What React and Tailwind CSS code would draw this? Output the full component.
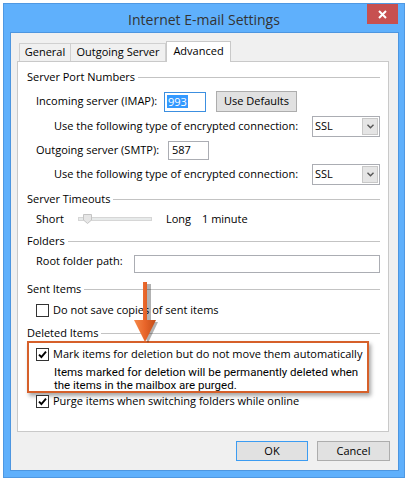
import React from "react";

function Check({ checked }) {
  return (
    <span className="w-[13px] h-[13px] border border-[#333333] bg-white flex items-center justify-center shrink-0">
      {checked && (
        <svg width="9" height="9" viewBox="0 0 9 9">
          <path d="M1 4.6 L3.4 7 L8 1.6" stroke="#000" strokeWidth="1.9" fill="none" />
        </svg>
      )}
    </span>
  );
}

function Header({ title, className = "" }) {
  return (
    <div className={"flex items-center h-[16px] " + className}>
      <span className="whitespace-nowrap">{title}</span>
      <span className="flex-1 h-px bg-[#c3c3c3] ml-[3px]" />
    </div>
  );
}

function Select() {
  return (
    <div className="w-[68px] h-[21px] border border-[#abadb3] bg-white flex items-center">
      <span className="flex-1 pl-[2px]">SSL</span>
      <span className="w-[16px] h-[17px] mr-px bg-[#e5e5e5] border border-[#c8c8c8] flex items-center justify-center">
        <svg width="7" height="5" viewBox="0 0 7 5">
          <path d="M0.5 0.8 L3.5 3.8 L6.5 0.8" stroke="#555" strokeWidth="1.4" fill="none" />
        </svg>
      </span>
    </div>
  );
}

export default function App() {
  return (
    <div className="w-[407px] h-[482px] bg-white pt-[3px] pl-[3px] font-['Open_Sans',sans-serif] text-[11px] text-black">
      <div className="w-[402px] h-[475px] bg-[#5fb0fc] border border-[#4f98e2] flex flex-col">
        {/* title bar */}
        <div className="h-[28px] flex items-start shrink-0">
          <div className="w-[37px]" />
          <div className="flex-1 h-[30px] flex items-center justify-center text-[14px] text-[#333333]">
            Internet E-mail Settings
          </div>
          <div className="w-[31px] h-[20px] bg-[#c75050] flex items-center justify-center mr-[6px]">
            <svg width="9" height="9" viewBox="0 0 9 9">
              <path d="M1 1 L8 8 M8 1 L1 8" stroke="#fff" strokeWidth="2" />
            </svg>
          </div>
        </div>
        {/* client */}
        <div className="flex-1 ml-[6px] mr-[5px] mb-[6px] border border-[#4d96e0] bg-[#f0f0f0] flex flex-col">
          <div className="mt-[8px] ml-[6px] h-[20px] flex items-end pl-[2px]">
            <div className="h-[18px] w-[52px] border-t border-l border-r border-[#d0d0d0] bg-[#f0f0f0] flex items-center justify-center">
              General
            </div>
            <div className="h-[18px] w-[95px] border-t border-r border-[#d0d0d0] bg-[#f0f0f0] flex items-center justify-center">
              Outgoing Server
            </div>
            <div className="relative z-10 h-[21px] -mb-px w-[65px] border-t border-l border-r border-[#c9c9c9] bg-white flex items-start justify-center pt-[1px]">
              Advanced
            </div>
          </div>
          <div className="relative ml-[6px] w-[372px] h-[371px] border border-[#c9c9c9] bg-white pl-[9px] pr-[8px] pt-[7px] flex flex-col">
            <Header title="Server Port Numbers" />
            <div className="mt-[6px] h-[21px] flex items-center pl-[9px]">
              <span className="w-[128px]">Incoming server (IMAP):</span>
              <div className="w-[42px] h-[20px] border border-[#3c8fe0] bg-white flex items-center pl-[2px]">
                <span className="bg-[#3399ff] text-white leading-[13px] px-px">993</span>
              </div>
              <div className="ml-[10px] w-[81px] h-[21px] border border-[#adadad] bg-[#e1e1e1] flex items-center justify-center">
                Use Defaults
              </div>
            </div>
            <div className="mt-[4px] h-[21px] flex items-center justify-between pl-[27px]">
              <span>Use the following type of encrypted connection:</span>
              <Select />
            </div>
            <div className="mt-[3px] h-[20px] flex items-center pl-[9px]">
              <span className="w-[132px]">Outgoing server (SMTP):</span>
              <div className="w-[41px] h-[19px] border border-[#abadb3] bg-white flex items-center pl-[3px]">
                587
              </div>
            </div>
            <div className="mt-[4px] h-[20px] flex items-center justify-between pl-[27px]">
              <span>Use the following type of encrypted connection:</span>
              <Select />
            </div>
            <Header title="Server Timeouts" className="mt-[7px]" />
            <div className="mt-[4px] h-[16px] flex items-center pl-[9px]">
              <span className="w-[42px]">Short</span>
              <div className="relative w-[74px] h-[4px] bg-[#e7eaea] border border-[#d6d6d6]">
                <svg className="absolute left-[4px] -top-[4px]" width="9" height="10" viewBox="0 0 9 10">
                  <path d="M0.5 0.5 H8.5 V6 L4.5 9.5 L0.5 6 Z" fill="#e6e6e6" stroke="#c4c4c4" />
                </svg>
              </div>
              <span className="ml-[14px] w-[36px]">Long</span>
              <span>1 minute</span>
            </div>
            <Header title="Folders" className="mt-[6px]" />
            <div className="mt-[6px] h-[18px] flex items-center pl-[9px]">
              <span className="w-[98px] -mt-[5px]">Root folder path:</span>
              <div className="flex-1 h-[18px] border border-[#abadb3] bg-white" />
            </div>
            <Header title="Sent Items" className="mt-[8px]" />
            <div className="mt-[5px] h-[16px] flex items-center pl-[9px] gap-[4px]">
              <Check />
              <span>Do not save copies of sent items</span>
            </div>
            <Header title="Deleted Items" className="mt-[7px]" />
            <div className="mt-0 w-[342px] h-[52px] border-2 border-[#d6602a] shadow-[2px_3px_4px_rgba(0,0,0,0.35)] pl-[7px] pt-[3px] flex flex-col">
              <div className="h-[16px] flex items-center gap-[4px]">
                <Check checked />
                <span>Mark items for deletion but do not move them automatically</span>
              </div>
              <div className="mt-[4px] pl-[18px] font-['Roboto',sans-serif] text-[11.5px] leading-[13px]">
                <div>Items marked for deletion will be permanently deleted when</div>
                <div>the items in the mailbox are purged.</div>
              </div>
            </div>
            <div className="h-[16px] flex items-center pl-[9px] gap-[4px]">
              <Check checked />
              <span>Purge items when switching folders while online</span>
            </div>
            {/* arrow overlay */}
            <svg className="absolute left-[113px] top-[218px]" width="32" height="64" viewBox="0 0 32 64">
              <defs>
                <linearGradient id="ar" x1="0" x2="1" y1="0" y2="0">
                  <stop offset="0" stopColor="#f58a4a" />
                  <stop offset="0.5" stopColor="#e8652a" />
                  <stop offset="1" stopColor="#c24d18" />
                </linearGradient>
              </defs>
              <path d="M16 4 H20 V42 H27 L17 63 L7 42 H14 Z" fill="#000" opacity="0.3" />
              <path d="M12 2 H16 V40 H25 L14 62 L3 40 H12 Z" fill="url(#ar)" />
            </svg>
          </div>
          <div className="mt-[9px] flex justify-end gap-[9px] pr-[8px]">
            <div className="w-[72px] h-[20px] border border-[#3c9cf2] bg-[#e1e1e1] flex items-center justify-center">
              OK
            </div>
            <div className="w-[73px] h-[20px] border border-[#adadad] bg-[#e1e1e1] flex items-center justify-center">
              Cancel
            </div>
          </div>
        </div>
      </div>
    </div>
  );
}
